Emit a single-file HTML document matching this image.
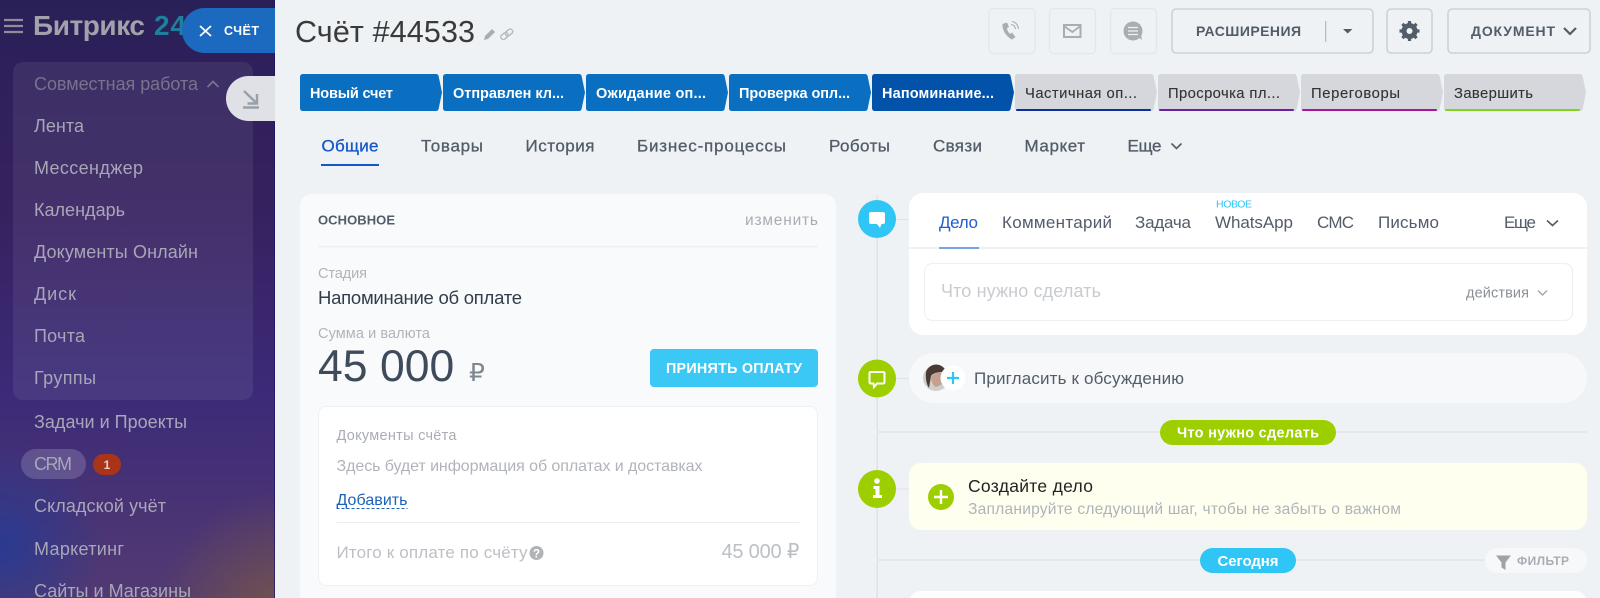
<!DOCTYPE html>
<html lang="ru"><head><meta charset="utf-8"><title>Счёт #44533</title>
<style>
html,body{margin:0;padding:0;width:1600px;height:598px;overflow:hidden;background:#eef2f4}
svg{display:block;overflow:hidden;font-family:"Liberation Sans","DejaVu Sans",sans-serif}
.s{font-size:18px;fill:#a9a6b8}
.st{font-size:14.500px;fill:#fff;font-weight:700}
.sd{font-size:14.800px;fill:#333;stroke:#333;stroke-width:.12}
.tab{font-size:17px;fill:#535c69;stroke:#535c69;stroke-width:.3}
.tt{font-size:17px;fill:#535c69}
.g{fill:#b0b4ba}
</style></head><body>
<svg xmlns="http://www.w3.org/2000/svg" width="1600" height="598" viewBox="0 0 1600 598">
<defs>
<linearGradient id="b" x1="0" y1="0" x2="0" y2="1"><stop offset="0" stop-color="#2a2058"/><stop offset=".35" stop-color="#36215f"/><stop offset=".65" stop-color="#3c2a78"/><stop offset="1" stop-color="#523a72"/></linearGradient>
<radialGradient id="bl" gradientUnits="userSpaceOnUse" cx="0" cy="545" r="105"><stop offset="0" stop-color="#2a3a90"/><stop offset="1" stop-color="#2a3a90" stop-opacity="0"/></radialGradient>
<radialGradient id="br" gradientUnits="userSpaceOnUse" cx="285" cy="620" r="130"><stop offset="0" stop-color="#75544a"/><stop offset="1" stop-color="#75544a" stop-opacity="0"/></radialGradient>
<path id="tip" d="M3 74H136Q138 74 138.600 76L142 92.500L138.600 109Q138 111 136 111H3Q0 111 0 108V77Q0 74 3 74Z"/>
</defs>

<!-- sidebar -->
<rect width="275" height="598" fill="url(#b)"/>
<rect width="275" height="598" fill="url(#bl)"/>
<rect width="275" height="598" fill="url(#br)"/>
<rect x="274" width="1.200" height="598" fill="#1c1368" opacity=".7"/>
<rect x="13" y="62" width="240" height="338" rx="10" fill="#fff" opacity=".07"/>
<path d="M4 20H23M4 26H23M4 32H23" stroke="#8f8d9a" stroke-width="2.200"/>
<text x="33" y="35" font-size="28" font-weight="700" fill="#a3a2aa" textLength="112">Битрикс</text>
<text x="154" y="35" font-size="28" font-weight="700" fill="#1f7f9e" textLength="32">24</text>
<text class="s" x="34" y="90" textLength="164" style="fill:#78728c">Совместная работа</text>
<path d="M207.500 87L213 81.500L218.500 87" fill="none" stroke="#78728c" stroke-width="1.800"/>
<text class="s" x="34" y="132" textLength="50">Лента</text>
<text class="s" x="34" y="174" textLength="109">Мессенджер</text>
<text class="s" x="34" y="216" textLength="91">Календарь</text>
<text class="s" x="34" y="258" textLength="164">Документы Онлайн</text>
<text class="s" x="34" y="300" textLength="42">Диск</text>
<text class="s" x="34" y="342" textLength="51">Почта</text>
<text class="s" x="34" y="384" textLength="62">Группы</text>
<text class="s" x="34" y="428" textLength="153">Задачи и Проекты</text>
<rect x="21" y="449" width="65" height="30" rx="15" fill="#fff" opacity=".17"/>
<text class="s" x="34" y="470" textLength="38">CRM</text>
<rect x="93" y="454" width="28" height="21" rx="10.500" fill="#a93419"/>
<text x="107" y="469" font-size="12" font-weight="700" fill="#e8d0c8" text-anchor="middle">1</text>
<text class="s" x="34" y="512" textLength="132">Складской учёт</text>
<text class="s" x="34" y="555" textLength="90">Маркетинг</text>
<text class="s" x="34" y="597" textLength="157">Сайты и Магазины</text>

<!-- main -->
<rect x="275" width="1325" height="598" fill="#eef2f4"/>

<!-- side tabs -->
<path d="M275 8H204.500A22.500 22.500 0 0 0 204.500 53H275Z" fill="#1b6abf"/>
<path d="M200 26L211 36M211 26L200 36" stroke="#fff" stroke-width="1.800"/>
<text x="224" y="35" font-size="12.500" font-weight="700" fill="#fff" textLength="35">СЧЁТ</text>
<path d="M275 76H248.500A22.500 22.500 0 0 0 248.500 121H275Z" fill="#dfe1e6"/>
<path d="M244 91L257 103.500M257 94V103.500H247.500M243 107.500H259" fill="none" stroke="#9aa0a8" stroke-width="2.400"/>

<!-- title -->
<text x="295" y="42" font-size="30.500" fill="#3a3a3a" textLength="180">Счёт #44533</text>
<path d="M484 40L485 36L492 29L495 32L488 39Z" fill="#a8adb4"/>
<g fill="none" stroke="#b5b9be" stroke-width="1.400"><rect x="500.500" y="33.500" width="8" height="5" rx="2.500" transform="rotate(-40 504.500 36)"/><rect x="505" y="30" width="8" height="5" rx="2.500" transform="rotate(-40 509 32.500)"/></g>

<!-- top buttons -->
<g fill="none" stroke="#e4e7ea" stroke-width="1.200">
<rect x="989" y="8.500" width="46" height="45" rx="4"/><rect x="1049.500" y="8.500" width="46" height="45" rx="4"/><rect x="1110.500" y="8.500" width="46" height="45" rx="4"/>
</g>
<path d="M1002.500 24C1002 30 1006 36.500 1012 39.500L1015.500 37L1012 32.500L1010 34C1008 32 1007 30 1007 28L1009 27L1007 22.500Z" fill="#a8adb4"/>
<path d="M1011 24.500Q1015 25 1015.500 29M1012 21.500Q1017.500 22.500 1018.500 29" fill="none" stroke="#a8adb4" stroke-width="1.100"/>
<rect x="1064" y="25" width="16.500" height="12" fill="none" stroke="#a8adb4" stroke-width="2"/>
<path d="M1064 26L1072.300 32L1080.500 26" fill="none" stroke="#a8adb4" stroke-width="1.800"/>
<circle cx="1133" cy="31" r="9.500" fill="#a8adb4"/><path d="M1138 37L1142 40L1141 35Z" fill="#a8adb4"/>
<path d="M1128 27.500H1138M1128 31H1138M1128 34.500H1138" stroke="#eef2f4" stroke-width="1.200"/>
<rect x="1172" y="9" width="201" height="44" rx="4" fill="none" stroke="#ccd1d6" stroke-width="1.600"/>
<text x="1196" y="36" font-size="14" font-weight="700" fill="#535c69" textLength="105">РАСШИРЕНИЯ</text>
<rect x="1325" y="21" width="1.300" height="21" fill="#b8bec4"/>
<path d="M1343 29H1352.500L1347.700 33.500Z" fill="#535c69"/>
<rect x="1387" y="9" width="45" height="44" rx="4" fill="none" stroke="#ccd1d6" stroke-width="1.600"/>
<circle cx="1409.500" cy="31" r="5.500" fill="none" stroke="#535c69" stroke-width="5"/>
<path d="M1409.500 21V24M1409.500 38V41M1399.500 31H1402.500M1416.500 31H1419.500M1402.400 23.900L1404.500 26M1414.500 36L1416.600 38.100M1402.400 38.100L1404.500 36M1414.500 26L1416.600 23.900" stroke="#535c69" stroke-width="3.200"/>
<rect x="1448" y="9" width="142" height="44" rx="4" fill="none" stroke="#ccd1d6" stroke-width="1.600"/>
<text x="1471" y="36" font-size="14" font-weight="700" fill="#535c69" textLength="84">ДОКУМЕНТ</text>
<path d="M1564 28L1570 34L1576 28" fill="none" stroke="#535c69" stroke-width="2.200"/>

<!-- stages -->
<use href="#tip" x="300" fill="#0a6fc0"/><use href="#tip" x="443" fill="#0a6fc0"/><use href="#tip" x="586" fill="#0a6fc0"/><use href="#tip" x="729" fill="#0a6fc0"/><use href="#tip" x="872" fill="#0352aa"/>
<use href="#tip" x="1015" fill="#d5d7dc"/><use href="#tip" x="1158" fill="#d5d7dc"/><use href="#tip" x="1301" fill="#d5d7dc"/><use href="#tip" x="1444" fill="#d5d7dc"/>
<rect x="1016" y="109" width="135" height="2" rx="1" fill="#0d2ea0"/><rect x="1159" y="109" width="135" height="2" rx="1" fill="#6a1fa0"/><rect x="1302" y="109" width="135" height="2" rx="1" fill="#a9149c"/><rect x="1445" y="109" width="135" height="2" rx="1" fill="#7fd61f"/>
<text class="st" x="310" y="98" textLength="83">Новый счет</text>
<text class="st" x="453" y="98" textLength="111">Отправлен кл...</text>
<text class="st" x="596" y="98" textLength="110">Ожидание оп...</text>
<text class="st" x="739" y="98" textLength="111">Проверка опл...</text>
<text class="st" x="882" y="98" textLength="112">Напоминание...</text>
<text class="sd" x="1025" y="98" textLength="112">Частичная оп...</text>
<text class="sd" x="1168" y="98" textLength="112">Просрочка пл...</text>
<text class="sd" x="1311" y="98" textLength="89">Переговоры</text>
<text class="sd" x="1454" y="98" textLength="79">Завершить</text>

<!-- tabs -->
<text class="tab" x="321.500" y="151.500" textLength="57" style="fill:#1458c8;stroke:#1458c8">Общие</text>
<rect x="321" y="164" width="58" height="2" fill="#1458c8"/>
<text class="tab" x="421" y="151.500" textLength="62">Товары</text>
<text class="tab" x="525.500" y="151.500" textLength="69">История</text>
<text class="tab" x="637" y="151.500" textLength="149">Бизнес-процессы</text>
<text class="tab" x="829" y="151.500" textLength="61">Роботы</text>
<text class="tab" x="933" y="151.500" textLength="49">Связи</text>
<text class="tab" x="1024.500" y="151.500" textLength="60.500">Маркет</text>
<text class="tab" x="1127.500" y="151.500" textLength="34">Еще</text>
<path d="M1171.500 143.500L1176.500 148.500L1181.500 143.500" fill="none" stroke="#535c69" stroke-width="1.600"/>

<!-- left card -->
<path d="M300 598V206A12 12 0 0 1 312 194H824A12 12 0 0 1 836 206V598Z" fill="#f9fafc"/>
<text x="318" y="224.500" font-size="13" font-weight="700" fill="#535c69" textLength="77">ОСНОВНОЕ</text>
<text x="818" y="225" font-size="15.500" fill="#a8adb4" text-anchor="end" textLength="73">изменить</text>
<rect x="318" y="246" width="500" height="1.500" fill="#eef1f4"/>
<text x="318" y="278" font-size="14.500" class="g" textLength="49">Стадия</text>
<text x="318" y="304" font-size="18.500" fill="#333c4a" textLength="204">Напоминание об оплате</text>
<text x="318" y="338" font-size="14.500" class="g" textLength="112">Сумма и валюта</text>
<text y="381" font-size="44.500" fill="#3f4b5b"><tspan x="318">45</tspan> <tspan x="380">000</tspan></text>
<text x="469" y="381" font-size="25" fill="#7f8791" textLength="16">₽</text>
<rect x="650" y="349" width="168" height="38" rx="4" fill="#3bc8f5"/>
<text x="734" y="373" font-size="14.300" font-weight="700" fill="#fff" text-anchor="middle" textLength="136">ПРИНЯТЬ ОПЛАТУ</text>

<rect x="318.500" y="406.500" width="499" height="179" rx="8" fill="#fff" stroke="#eef2f5"/>
<text x="336.500" y="440" font-size="14.500" fill="#a8adb4" textLength="120">Документы счёта</text>
<text x="336.500" y="471" font-size="16" class="g" textLength="366">Здесь будет информация об оплатах и доставках</text>
<text x="336.500" y="505" font-size="16" fill="#1c62b8" textLength="71">Добавить</text>
<path d="M336.500 508.500H407.500" stroke="#1c62b8" stroke-width="1" stroke-dasharray="3 2"/>
<rect x="336.500" y="522" width="463" height="1" fill="#e8eef3"/>
<text x="336.500" y="558" font-size="17" fill="#bcc0c5" textLength="191">Итого к оплате по счёту</text>
<circle cx="536.500" cy="553" r="7" fill="#b0b4b8"/><text x="536.500" y="557.500" font-size="11.500" font-weight="700" fill="#fff" text-anchor="middle">?</text>
<text x="799.500" y="558" font-size="20" fill="#bcc0c5" text-anchor="end" textLength="78">45 000 ₽</text>

<!-- timeline -->
<rect x="876.500" y="195" width="1.500" height="403" fill="#dfe3e7"/>
<path d="M877 219.500H909M877 378.500H909M877 489H909" stroke="#dfe3e7"/>
<rect x="877" y="431" width="710" height="2" fill="#e4e8ec"/>
<rect x="877" y="559" width="608" height="2" fill="#e4e8ec"/>
<circle cx="877" cy="219" r="19" fill="#2fc6f6"/>
<path d="M871 212H883Q885 212 885 214V222Q885 224 883 224H881.500L880 228L877 224H871Q869 224 869 222V214Q869 212 871 212Z" fill="#fff"/>
<circle cx="877" cy="378.500" r="19" fill="#9dcf00"/>
<path d="M871 372H883Q884.500 372 884.500 373.500V382Q884.500 383.500 883 383.500H877L874 387L873.500 383.500H871Q869.500 383.500 869.500 382V373.500Q869.500 372 871 372Z" fill="none" stroke="#fff" stroke-width="2"/>
<circle cx="877" cy="489" r="19" fill="#9dcf00"/>
<circle cx="877" cy="481" r="2.800" fill="#fff"/><path d="M873.500 486H879.500V495H882V498H873V495H875.500V489H873.500Z" fill="#fff"/>

<!-- composer card -->
<rect x="909" y="193" width="678" height="142" rx="14" fill="#fff"/>
<rect x="909" y="247" width="678" height="2" fill="#eef1f4"/>
<rect x="939" y="247" width="40" height="2" fill="#7d9fe8"/>
<text x="939" y="228" font-size="17" fill="#1f5fd0" textLength="39">Дело</text>
<text class="tt" x="1002" y="228" textLength="110">Комментарий</text>
<text class="tt" x="1135" y="228" textLength="56">Задача</text>
<text x="1216" y="207.500" font-size="10.500" fill="#2fc6f6" textLength="36">НОВОЕ</text>
<text class="tt" x="1215" y="228" textLength="78">WhatsApp</text>
<text class="tt" x="1317" y="228" textLength="37">СМС</text>
<text class="tt" x="1378" y="228" textLength="61">Письмо</text>
<text class="tt" x="1504" y="228" textLength="32">Еще</text>
<path d="M1547 220.500L1552.500 225.500L1558 220.500" fill="none" stroke="#535c69" stroke-width="1.600"/>
<rect x="924.500" y="263.500" width="648" height="57" rx="8" fill="#fff" stroke="#eef1f4" stroke-width="1.200"/>
<text x="941" y="297" font-size="18" fill="#c8cbcf" textLength="160">Что нужно сделать</text>
<text x="1466" y="297.500" font-size="14.500" fill="#8a9098" textLength="63">действия</text>
<path d="M1538 290.500L1542.500 295L1547 290.500" fill="none" stroke="#a0a5ab" stroke-width="1.400"/>

<!-- invite -->
<rect x="909" y="353" width="678" height="50" rx="25" fill="#f6f8f9"/>
<circle cx="936" cy="378" r="13" fill="#cfcfcc"/>
<path d="M926 372A11 12 0 0 1 946 371L946 380L942 372Q934 372 931 376L929 388Q925 382 926 372Z" fill="#4a3a36"/>
<path d="M931 377Q936 371 942 373L943 384L936 387Q931 384 931 377Z" fill="#c4a090"/>
<circle cx="953" cy="378" r="12.500" fill="#fff"/>
<path d="M947 378H959M953 372V384" stroke="#2fc6f6" stroke-width="2.200"/>
<text x="974" y="384" font-size="17" fill="#535c69" textLength="210">Пригласить к обсуждению</text>

<!-- green pill -->
<rect x="1160" y="420" width="176" height="25" rx="12.500" fill="#9dcf00"/>
<text x="1248" y="437.500" font-size="14.500" font-weight="700" fill="#fff" text-anchor="middle" textLength="142">Что нужно сделать</text>

<!-- yellow card -->
<rect x="909" y="463" width="678" height="67" rx="12" fill="#fffff0"/>
<circle cx="941" cy="497" r="13" fill="#9dcf00"/>
<path d="M934 497H948M941 490V504" stroke="#fff" stroke-width="2.500"/>
<text x="968" y="492" font-size="17.500" fill="#222" textLength="125">Создайте дело</text>
<text x="968" y="514" font-size="15.600" fill="#b0b4b9" textLength="433">Запланируйте следующий шаг, чтобы не забыть о важном</text>

<!-- today pill -->
<rect x="1200" y="548" width="96" height="25" rx="12.500" fill="#2fc6f6"/>
<text x="1248" y="566" font-size="15" font-weight="700" fill="#fff" text-anchor="middle" textLength="61">Сегодня</text>
<rect x="1485" y="548" width="102" height="25" rx="12.500" fill="#f6f8f9"/>
<path d="M1496 555.500H1511L1505.500 562.500V570L1501.500 567.500V562.500Z" fill="#9ea3a9"/>
<text x="1517" y="565" font-size="12" font-weight="700" fill="#a8adb4" textLength="52">ФИЛЬТР</text>

<!-- bottom card -->
<path d="M909 598V603A12 12 0 0 1 921 591H1575A12 12 0 0 1 1587 603V598Z" fill="#fff"/>
</svg>
</body></html>
